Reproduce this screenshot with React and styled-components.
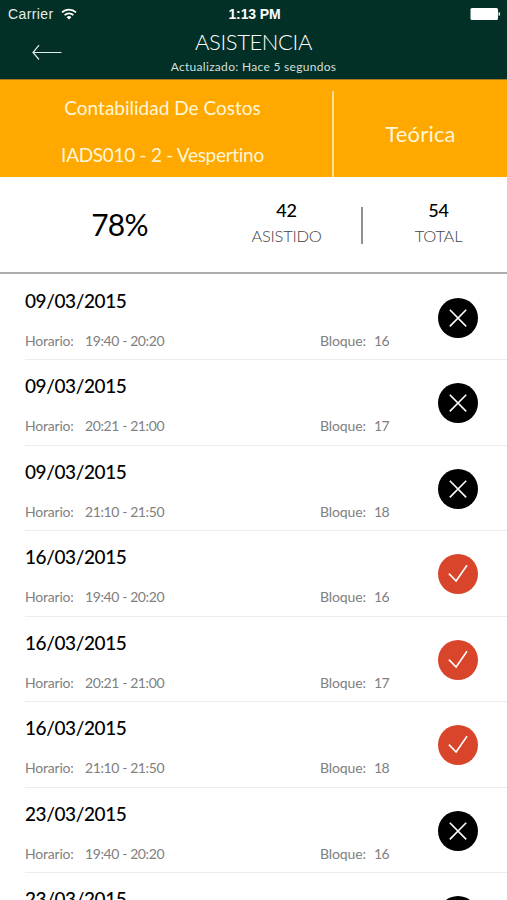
import React from "react";
import styled, { createGlobalStyle } from "styled-components";

const records = [
  { date: "09/03/2015", time: "19:40 - 20:20", block: 16, present: false },
  { date: "09/03/2015", time: "20:21 - 21:00", block: 17, present: false },
  { date: "09/03/2015", time: "21:10 - 21:50", block: 18, present: false },
  { date: "16/03/2015", time: "19:40 - 20:20", block: 16, present: true },
  { date: "16/03/2015", time: "20:21 - 21:00", block: 17, present: true },
  { date: "16/03/2015", time: "21:10 - 21:50", block: 18, present: true },
  { date: "23/03/2015", time: "19:40 - 20:20", block: 16, present: false },
  { date: "23/03/2015", time: "20:21 - 21:00", block: 17, present: false },
];

export default function App() {
  return (
    <Screen>
      <GlobalStyle />
      <Header>
        <StatusBar>
          <Carrier>
            Carrier
            <WifiIcon />
          </Carrier>
          <Clock>1:13 PM</Clock>
          <BatterySlot>
            <BatteryIcon />
          </BatterySlot>
        </StatusBar>
        <NavBar>
          <BackButton aria-label="Volver">
            <BackIcon />
          </BackButton>
          <NavTitles>
            <Title>ASISTENCIA</Title>
            <Updated>Actualizado: Hace 5 segundos</Updated>
          </NavTitles>
        </NavBar>
      </Header>
      <Course>
        <CourseInfo>
          <CourseName>Contabilidad De Costos</CourseName>
          <CourseCode>IADS010 - 2 - Vespertino</CourseCode>
        </CourseInfo>
        <CourseDivider />
        <CourseType>Teórica</CourseType>
      </Course>
      <Summary>
        <Percent>78%</Percent>
        <Stat $width={149}>
          <StatValue>42</StatValue>
          <StatLabel>ASISTIDO</StatLabel>
        </Stat>
        <StatDivider />
        <Stat $width={151}>
          <StatValue>54</StatValue>
          <StatLabel>TOTAL</StatLabel>
        </Stat>
      </Summary>
      <List>
        {records.map((record, index) => (
          <Row key={index}>
            <RowBody>
              <RowDate>{record.date}</RowDate>
              <RowDetails>
                <Label $width={60} $spacing={-0.2}>
                  Horario:
                </Label>
                <Hours>{record.time}</Hours>
                <Label $width={54} $spacing={-0.1}>
                  Bloque:
                </Label>
                <Block>{record.block}</Block>
              </RowDetails>
            </RowBody>
            <Mark $present={record.present}>
              {record.present ? <CheckIcon /> : <CrossIcon />}
            </Mark>
          </Row>
        ))}
      </List>
    </Screen>
  );
}

function WifiIcon() {
  return (
    <svg width="16" height="12" viewBox="0 0 16 12" fill="none" stroke="#fff" strokeWidth="1.7">
      <path d="M1 4.4a10 10 0 0 1 14 0" />
      <path d="M3.6 7.2a6.2 6.2 0 0 1 8.8 0" />
      <path d="M8 11.6 5.6 9.2a3.4 3.4 0 0 1 4.8 0z" fill="#fff" stroke="none" />
    </svg>
  );
}

function BatteryIcon() {
  return (
    <svg width="31" height="12" viewBox="0 0 31 12" fill="#fff">
      <rect x="0.5" y="0" width="27.5" height="12" rx="1.5" />
      <path d="M28.6 4c2 .4 2 3.6 0 4z" />
    </svg>
  );
}

function BackIcon() {
  return (
    <svg width="30" height="16" viewBox="0 0 30 16" fill="none" stroke="#e3eae7" strokeWidth="1.2">
      <path d="M1 8.5h28.5M7 1.2 1 8.5l6 7" />
    </svg>
  );
}

function CrossIcon() {
  return (
    <svg width="40" height="40" viewBox="0 0 40 40" fill="none" stroke="#fff" strokeWidth="1.6">
      <path d="m11.8 11.8 16.4 16.6M28.2 11.8 11.8 28.4" />
    </svg>
  );
}

function CheckIcon() {
  return (
    <svg width="40" height="40" viewBox="0 0 40 40" fill="none" stroke="#fff" strokeWidth="1.6">
      <path d="m10.9 19.6 7.2 7.4L29 11.3" />
    </svg>
  );
}

const GlobalStyle = createGlobalStyle`
  * {
    box-sizing: border-box;
  }
  body {
    margin: 0;
    overflow: hidden;
    background: #fff;
  }
`;

const Screen = styled.div`
  display: flex;
  flex-direction: column;
  width: 507px;
  height: 900px;
  overflow: hidden;
  background: #fff;
  color: #000;
  font-family: Lato, "Open Sans", sans-serif;
  white-space: nowrap;
`;

const Header = styled.header`
  flex: none;
  height: 79px;
  background: #023026;
  color: #fff;
`;

const StatusBar = styled.div`
  display: grid;
  grid-template-columns: 1fr auto 1fr;
  align-items: center;
  height: 28px;
  padding: 0 6px 0 8px;
  font-family: "Liberation Sans", Arial, sans-serif;
  font-size: 14px;
`;

const Carrier = styled.div`
  display: flex;
  align-items: center;
  gap: 7px;
  letter-spacing: 0.4px;
  color: #e8eeec;
`;

const Clock = styled.div`
  font-weight: bold;
  letter-spacing: -0.1px;
`;

const BatterySlot = styled.div`
  display: flex;
  justify-content: flex-end;
`;

const NavBar = styled.div`
  display: grid;
  grid-template-columns: 92px 1fr 92px;
`;

const BackButton = styled.button`
  display: flex;
  align-items: center;
  height: 48px;
  padding: 0 0 0 32px;
  border: none;
  background: none;
`;

const NavTitles = styled.div`
  text-align: center;
`;

const Title = styled.h1`
  margin: 0;
  font-size: 22px;
  font-weight: 300;
  line-height: 28px;
  letter-spacing: -0.4px;
`;

const Updated = styled.div`
  font-size: 12px;
  line-height: 22px;
  letter-spacing: 0.3px;
  color: #d5dfdb;
`;

const Course = styled.section`
  display: flex;
  flex: none;
  height: 98px;
  border-top: 1px solid #a67a1c;
  background: #ffa800;
  color: #fff6d8;
`;

const CourseInfo = styled.div`
  display: flex;
  flex-direction: column;
  width: 332px;
  padding: 4px 7px 0 0;
  text-align: center;
  font-size: 19px;
  line-height: 47px;
`;

const CourseName = styled.div`
  letter-spacing: 0;
`;

const CourseCode = styled.div`
  letter-spacing: -0.3px;
`;

const CourseDivider = styled.div`
  width: 2px;
  margin-top: 11px;
  background: #ffdf98;
`;

const CourseType = styled.div`
  flex: 1;
  padding-top: 11px;
  text-align: center;
  font-size: 22px;
  line-height: 86px;
  letter-spacing: 0.2px;
`;

const Summary = styled.section`
  display: flex;
  flex: none;
  height: 97px;
  border-bottom: 2px solid #adadad;
`;

const Percent = styled.div`
  flex: none;
  width: 212px;
  padding-left: 27px;
  text-align: center;
  font-size: 30px;
  line-height: 94px;
  letter-spacing: -0.7px;
`;

const Stat = styled.div`
  flex: none;
  width: ${(props) => props.$width}px;
  padding-top: 20px;
  text-align: center;
`;

const StatValue = styled.div`
  font-size: 18px;
  font-weight: 500;
  line-height: 26px;
  letter-spacing: -0.2px;
`;

const StatLabel = styled.div`
  font-size: 16.5px;
  font-weight: 300;
  line-height: 27px;
  letter-spacing: -0.25px;
  color: #444;
`;

const StatDivider = styled.div`
  flex: none;
  width: 2px;
  height: 37px;
  margin-top: 30px;
  background: #909090;
`;

const List = styled.ul`
  margin: 0;
  padding: 0.5px 0 0;
  list-style: none;
`;

const Row = styled.li`
  display: flex;
  height: 85.5px;
  margin-left: 25px;
  border-bottom: 1px solid #ececec;
`;

const RowBody = styled.div`
  width: 413px;
  padding-top: 12.2px;
`;

const RowDate = styled.div`
  font-size: 19px;
  font-weight: 500;
  line-height: 28px;
  letter-spacing: -0.4px;
`;

const RowDetails = styled.div`
  display: flex;
  padding-top: 15px;
  font-size: 14px;
  line-height: 22px;
  color: #808080;
`;

const Label = styled.span`
  width: ${(props) => props.$width}px;
  letter-spacing: ${(props) => props.$spacing}px;
`;

const Hours = styled.span`
  width: 235px;
  letter-spacing: -0.4px;
`;

const Block = styled.span`
  letter-spacing: -0.6px;
`;

const Mark = styled.div`
  width: 40px;
  height: 40px;
  margin-top: 23.2px;
  border-radius: 50%;
  background: ${(props) => (props.$present ? "#d9452b" : "#000")};
`;
